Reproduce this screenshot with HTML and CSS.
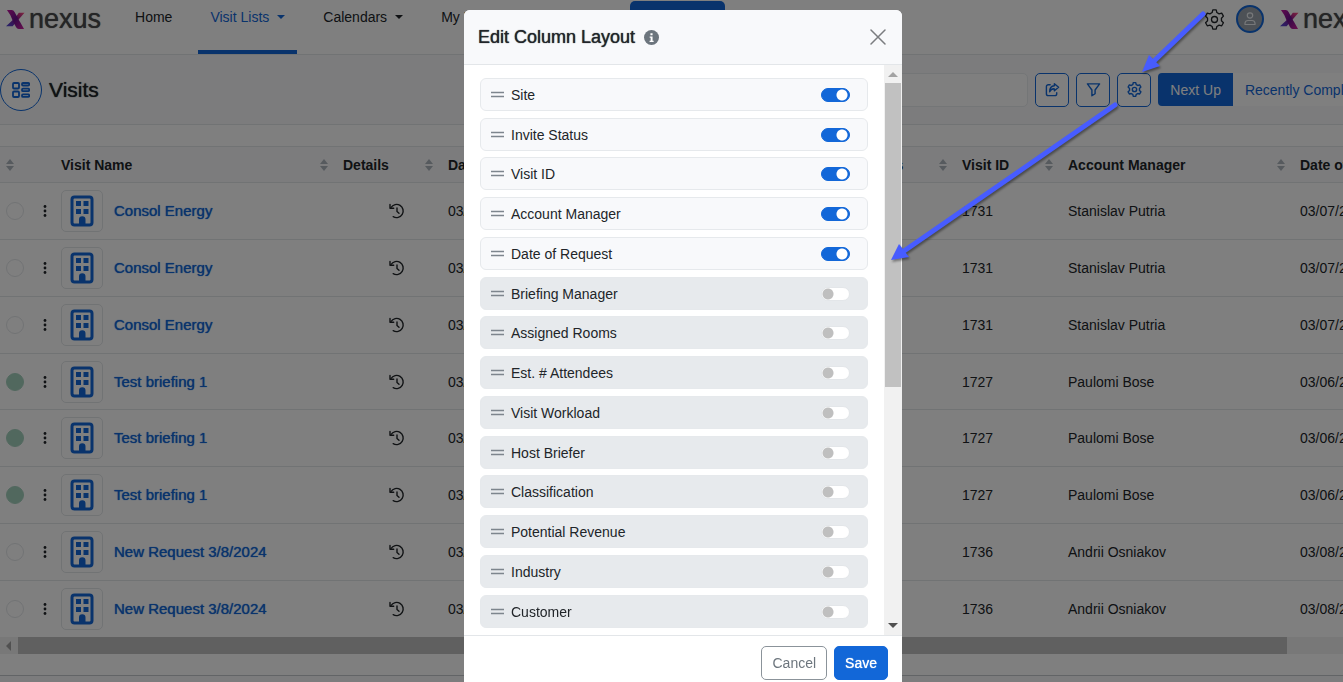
FILE: index.html
```
<!DOCTYPE html>
<html lang="en">
<head>
<meta charset="utf-8">
<title>Visits - Edit Column Layout</title>
<link rel="stylesheet" href="styles.css">
</head>
<body>
<svg class="defs" aria-hidden="true">
  <defs>
    <linearGradient id="logo-a" x1="1" y1="0" x2="0" y2="1"><stop offset="0" stop-color="#ff4f7f"/><stop offset=".45" stop-color="#8a1290"/><stop offset="1" stop-color="#4b4bd8"/></linearGradient>
    <linearGradient id="logo-b" x1="0" y1="0" x2="1" y2="1"><stop offset="0" stop-color="#c5179e"/><stop offset=".5" stop-color="#6a1190"/><stop offset="1" stop-color="#d0209c"/></linearGradient>
    <symbol id="logo" viewBox="0 0 20 21"><path d="M13.500 4h6L7 18H0L10 9Z" fill="url(#logo-a)"/><path d="M1 1h5q2 0 3 2l3.500 6.500q1 2.500 2.500 4.500l4 7h-5.500q-2 0-3-2L7 12Q5 6 1 1Z" fill="url(#logo-b)"/></symbol>
    <symbol id="building" viewBox="0 0 24 32"><rect x="2" y="2" width="20" height="28" rx="2.500" fill="none" stroke="currentColor" stroke-width="3"/><path fill="currentColor" d="M6 6h5v5H6zM13.500 6h5v5h-5zM6 14h5v5H6zM13.500 14h5v5h-5zM9 30v-5.500a3 3 0 0 1 6.500 0V30z"/></symbol>
    <symbol id="history" viewBox="0 0 16 16"><g fill="none" stroke="currentColor" stroke-width="1.400" stroke-linecap="round" stroke-linejoin="round"><path d="M2 4.500A6.600 6.600 0 1 1 4.200 13.700"/><path d="M1 1.500v3.700h3.700"/><path d="M8 5v3.500l2 1.800"/></g></symbol>
    <symbol id="sort" viewBox="0 0 8 12"><path fill="currentColor" d="M4 0 8 5H0zM4 12 0 7h8z"/></symbol>
    <symbol id="dots" viewBox="0 0 4 12"><g fill="currentColor"><circle cx="2" cy="1.500" r="1.400"/><circle cx="2" cy="6" r="1.400"/><circle cx="2" cy="10.500" r="1.400"/></g></symbol>
    <symbol id="gear" viewBox="0 0 16 16"><g fill="none" stroke="currentColor" stroke-linejoin="round"><path d="M6.700.7h2.600l.5 2 1.700 1 2-.6 1.300 2.300L13.300 7v2l1.500 1.500-1.300 2.300-2-.5-1.700 1-.5 2H6.700l-.5-2-1.700-1-2 .5-1.300-2.300L2.700 9V7L1.200 5.400l1.300-2.300 2 .6 1.700-1z"/><circle cx="8" cy="8" r="2.300"/></g></symbol>
    <symbol id="grip" viewBox="0 0 13 7"><path d="M0 1.500h13M0 5.500h13" stroke="currentColor" stroke-width="1.500"/></symbol>
  </defs>
</svg>

<div class="page">
  <header class="topbar">
    <a class="brand" href="#"><svg><use href="#logo"/></svg><span>nexus</span></a>
    <nav class="nav">
      <a href="#">Home</a>
      <a href="#" class="active">Visit Lists<i class="caret"></i></a>
      <a href="#">Calendars<i class="caret"></i></a>
      <a href="#">My Briefings</a>
    </nav>
    <button class="create" type="button">Create Visit</button>
    <div class="account">
      <svg class="gear"><use href="#gear"/></svg>
      <span class="avatar"><svg viewBox="0 0 12 14"><g fill="none" stroke="currentColor" stroke-width="1.200"><circle cx="6" cy="3.500" r="2.700"/><path d="M1 12.500v-1.500a3 3 0 0 1 3-2.500h4a3 3 0 0 1 3 2.500v1.500z" stroke-linejoin="round"/></g></svg></span>
      <a class="brand" href="#"><svg><use href="#logo"/></svg><span>nexus</span></a>
    </div>
  </header>

  <section class="toolbar">
    <span class="roundel"><svg viewBox="0 0 18 16"><g fill="none" stroke="currentColor" stroke-width="1.800"><rect x="1" y="1" width="6" height="5.500" rx="1"/><rect x="1" y="9.500" width="6" height="5.500" rx="1"/><rect x="10" y="1" width="7.200" height="2.500" rx="1"/><rect x="10" y="6.700" width="7.200" height="2.500" rx="1"/><rect x="10" y="12.400" width="7.200" height="2.500" rx="1"/></g></svg></span>
    <h1>Visits</h1>
    <input class="search" type="search" aria-label="Search visits">
    <button class="tool" type="button" aria-label="Share"><svg viewBox="0 0 16 16"><g fill="none" stroke="currentColor" stroke-width="1.500" stroke-linejoin="round" stroke-linecap="round"><path d="M5.500 3H3.500a2 2 0 0 0-2 2v7.500a2 2 0 0 0 2 2h7a2 2 0 0 0 2-2v-1"/><path d="M10 1.800 14.500 5.600 10 9.400V7.300Q6.500 7 5 10.500 4.800 4.400 10 4z"/></g></svg></button>
    <button class="tool" type="button" aria-label="Filter"><svg viewBox="0 0 16 16"><path d="M1.500 2h13L9.700 8.500v4L6.300 14.700V8.500z" fill="none" stroke="currentColor" stroke-width="1.500" stroke-linejoin="round"/></svg></button>
    <button class="tool gear-tool" type="button" aria-label="Column layout"><svg><use href="#gear"/></svg></button>
    <div class="segments"><button class="on" type="button">Next Up</button><button type="button">Recently Completed</button></div>
  </section>

  <main class="content">
    <table class="visits">
      <colgroup><col class="c-flag"><col class="c-name"><col class="c-details"><col class="c-date"><col class="c-site"><col class="c-status"><col class="c-id"><col class="c-manager"><col></colgroup>
      <thead><tr>
        <th class="flag"><svg class="sort"><use href="#sort"/></svg></th>
        <th><div>Visit Name<svg class="sort"><use href="#sort"/></svg></div></th>
        <th><div>Details<svg class="sort"><use href="#sort"/></svg></div></th>
        <th><div>Date<svg class="sort"><use href="#sort"/></svg></div></th>
        <th><div>Site<svg class="sort"><use href="#sort"/></svg></div></th>
        <th><div>Invite Status<svg class="sort"><use href="#sort"/></svg></div></th>
        <th><div>Visit ID<svg class="sort"><use href="#sort"/></svg></div></th>
        <th><div>Account Manager<svg class="sort"><use href="#sort"/></svg></div></th>
        <th><div>Date of Request</div></th>
      </tr></thead>
      <tbody>
        <tr><td class="flag"><div><i class="dot"></i><svg class="dots"><use href="#dots"/></svg></div></td><td><div><span class="tile"><svg><use href="#building"/></svg></span><a href="#">Consol Energy</a></div></td><td class="hist"><svg><use href="#history"/></svg></td><td>03/07/2024</td><td></td><td></td><td>1731</td><td>Stanislav Putria</td><td>03/07/2024</td></tr>
        <tr><td class="flag"><div><i class="dot"></i><svg class="dots"><use href="#dots"/></svg></div></td><td><div><span class="tile"><svg><use href="#building"/></svg></span><a href="#">Consol Energy</a></div></td><td class="hist"><svg><use href="#history"/></svg></td><td>03/07/2024</td><td></td><td></td><td>1731</td><td>Stanislav Putria</td><td>03/07/2024</td></tr>
        <tr><td class="flag"><div><i class="dot"></i><svg class="dots"><use href="#dots"/></svg></div></td><td><div><span class="tile"><svg><use href="#building"/></svg></span><a href="#">Consol Energy</a></div></td><td class="hist"><svg><use href="#history"/></svg></td><td>03/07/2024</td><td></td><td></td><td>1731</td><td>Stanislav Putria</td><td>03/07/2024</td></tr>
        <tr><td class="flag"><div><i class="dot green"></i><svg class="dots"><use href="#dots"/></svg></div></td><td><div><span class="tile"><svg><use href="#building"/></svg></span><a href="#">Test briefing 1</a></div></td><td class="hist"><svg><use href="#history"/></svg></td><td>03/06/2024</td><td></td><td></td><td>1727</td><td>Paulomi Bose</td><td>03/06/2024</td></tr>
        <tr><td class="flag"><div><i class="dot green"></i><svg class="dots"><use href="#dots"/></svg></div></td><td><div><span class="tile"><svg><use href="#building"/></svg></span><a href="#">Test briefing 1</a></div></td><td class="hist"><svg><use href="#history"/></svg></td><td>03/06/2024</td><td></td><td></td><td>1727</td><td>Paulomi Bose</td><td>03/06/2024</td></tr>
        <tr><td class="flag"><div><i class="dot green"></i><svg class="dots"><use href="#dots"/></svg></div></td><td><div><span class="tile"><svg><use href="#building"/></svg></span><a href="#">Test briefing 1</a></div></td><td class="hist"><svg><use href="#history"/></svg></td><td>03/06/2024</td><td></td><td></td><td>1727</td><td>Paulomi Bose</td><td>03/06/2024</td></tr>
        <tr><td class="flag"><div><i class="dot"></i><svg class="dots"><use href="#dots"/></svg></div></td><td><div><span class="tile"><svg><use href="#building"/></svg></span><a href="#">New Request 3/8/2024</a></div></td><td class="hist"><svg><use href="#history"/></svg></td><td>03/08/2024</td><td></td><td></td><td>1736</td><td>Andrii Osniakov</td><td>03/08/2024</td></tr>
        <tr><td class="flag"><div><i class="dot"></i><svg class="dots"><use href="#dots"/></svg></div></td><td><div><span class="tile"><svg><use href="#building"/></svg></span><a href="#">New Request 3/8/2024</a></div></td><td class="hist"><svg><use href="#history"/></svg></td><td>03/08/2024</td><td></td><td></td><td>1736</td><td>Andrii Osniakov</td><td>03/08/2024</td></tr>
      </tbody>
    </table>
    <div class="hscroll"><i class="arrow-left"></i><i class="thumb"></i></div>
  </main>
  <footer class="pagefoot"></footer>
</div>

<div class="backdrop">
  <div class="modal" role="dialog" aria-labelledby="dlg-title">
    <div class="modal-head">
      <h2 id="dlg-title">Edit Column Layout</h2>
      <svg class="info" viewBox="0 0 14 14"><circle cx="7" cy="7" r="7" fill="#6c757d"/><path d="M6 3h2v2H6zM5.300 6H8v4h1v1.200H5.200V10h1V7.200h-.9z" fill="#fff"/></svg>
      <button class="close" type="button" aria-label="Close"><svg viewBox="0 0 16 16"><path d="M1 1 15 15M15 1 1 15" stroke="currentColor" stroke-width="1.500" stroke-linecap="round"/></svg></button>
    </div>
    <div class="modal-body">
      <ul class="columns">
        <li class="on"><svg><use href="#grip"/></svg><label for="k1">Site</label><input id="k1" type="checkbox" checked></li>
        <li class="on"><svg><use href="#grip"/></svg><label for="k2">Invite Status</label><input id="k2" type="checkbox" checked></li>
        <li class="on"><svg><use href="#grip"/></svg><label for="k3">Visit ID</label><input id="k3" type="checkbox" checked></li>
        <li class="on"><svg><use href="#grip"/></svg><label for="k4">Account Manager</label><input id="k4" type="checkbox" checked></li>
        <li class="on"><svg><use href="#grip"/></svg><label for="k5">Date of Request</label><input id="k5" type="checkbox" checked></li>
        <li><svg><use href="#grip"/></svg><label for="k6">Briefing Manager</label><input id="k6" type="checkbox"></li>
        <li><svg><use href="#grip"/></svg><label for="k7">Assigned Rooms</label><input id="k7" type="checkbox"></li>
        <li><svg><use href="#grip"/></svg><label for="k8">Est. # Attendees</label><input id="k8" type="checkbox"></li>
        <li><svg><use href="#grip"/></svg><label for="k9">Visit Workload</label><input id="k9" type="checkbox"></li>
        <li><svg><use href="#grip"/></svg><label for="k10">Host Briefer</label><input id="k10" type="checkbox"></li>
        <li><svg><use href="#grip"/></svg><label for="k11">Classification</label><input id="k11" type="checkbox"></li>
        <li><svg><use href="#grip"/></svg><label for="k12">Potential Revenue</label><input id="k12" type="checkbox"></li>
        <li><svg><use href="#grip"/></svg><label for="k13">Industry</label><input id="k13" type="checkbox"></li>
        <li><svg><use href="#grip"/></svg><label for="k14">Customer</label><input id="k14" type="checkbox"></li>
      </ul>
      <div class="vscroll"><i class="arrow-up"></i><i class="thumb"></i><i class="arrow-down"></i></div>
    </div>
    <div class="modal-foot">
      <button class="cancel" type="button">Cancel</button>
      <button class="save" type="button">Save</button>
    </div>
  </div>
</div>

<svg class="pointers" width="1343" height="300" aria-hidden="true">
  <g stroke="#475cff" fill="#475cff">
    <path d="M1203 14 1153 62" stroke-width="5" stroke-linecap="round"/>
    <path d="M1142 72 1149 55 1160 66z" stroke="none"/>
    <path d="M1115 105 904 251" stroke-width="5" stroke-linecap="round"/>
    <path d="M891 260 899 244 909 257z" stroke="none"/>
  </g>
</svg>
</body>
</html>
```
FILE: styles.css
```
* { box-sizing: border-box; }
body {
  margin: 0;
  height: 100vh;
  overflow: hidden;
  background: #fff;
  color: #212529;
  font: 14px/20px "Liberation Sans", Arial, sans-serif;
}
a { color: inherit; text-decoration: none; }
button { font: inherit; cursor: pointer; }
svg { display: block; flex: none; }
.defs { position: absolute; width: 0; height: 0; }

/* The page is wider than the window and runs off its right edge */
.page { width: calc(100% + 52px); }

.topbar {
  display: flex;
  height: 55px;
  padding: 0 20px 0 6px;
  border-bottom: 1px solid #e3e6e9;
}
.brand {
  display: flex;
  align-items: center;
  gap: 4px;
  height: 37px;
  color: #4a4a4d;
  font-size: 27px;
  text-shadow: 0 0 1px currentColor;
}
.brand svg { width: 19px; height: 20px; }
.nav { display: flex; margin-left: 22px; }
.nav a { padding: 7px 12px 0; margin-right: 14px; white-space: nowrap; color: #212529; }
.nav a.active { color: #1267d8; border-bottom: 4px solid #1267d8; }
.caret {
  display: inline-block;
  margin-left: 8px;
  border: 4px solid transparent;
  border-top-color: currentColor;
  border-bottom: 0;
  vertical-align: 3px;
}
.create {
  width: 95px;
  height: 36px;
  margin: 1px 0 0 86px;
  border: 0;
  border-radius: 5px;
  background: #1267d8;
  color: #fff;
}
.account { display: flex; align-items: center; height: 38px; margin-left: auto; }
.account .gear { width: 21px; height: 21px; margin-right: 11px; }
.avatar {
  display: flex;
  align-items: center;
  justify-content: center;
  width: 28px;
  height: 28px;
  margin-right: 16px;
  border: 2px solid #1267d8;
  border-radius: 50%;
  background: #9aa3ad;
  color: #eef1f4;
}
.avatar svg { width: 12px; height: 14px; }

.toolbar {
  display: flex;
  align-items: center;
  gap: 7px;
  height: 70px;
  padding-right: 12px;
  border-bottom: 1px solid #e3e6e9;
  background: #f8f9fa;
}
.roundel {
  display: flex;
  align-items: center;
  justify-content: center;
  width: 42px;
  height: 42px;
  border: 1px solid #1267d8;
  border-radius: 50%;
  background: #fff;
  color: #1267d8;
}
.roundel svg { width: 18px; height: 16px; }
h1, h2 { margin: 0; font-weight: 400; text-shadow: 0 0 1px currentColor; }
h1 { font-size: 21px; color: #212529; }
.search {
  width: 330px;
  height: 34px;
  margin-left: auto;
  border: 1px solid #e9ecef;
  border-radius: 5px;
  background: #fff;
}
.tool {
  display: flex;
  align-items: center;
  justify-content: center;
  width: 34px;
  height: 34px;
  padding: 0;
  border: 1px solid #1267d8;
  border-radius: 5px;
  background: #fff;
  color: #1267d8;
}
.tool svg { width: 15px; height: 15px; }
.gear-tool svg { stroke-width: 1.5; }
.segments { display: flex; height: 33px; border-radius: 4px; background: #fff; overflow: hidden; }
.segments button { padding: 0 12px; border: 0; background: none; color: #1267d8; white-space: nowrap; }
.segments .on { background: #1267d8; color: #fff; }

.content { padding-top: 21px; }
.visits { width: 100%; border-collapse: separate; border-spacing: 0; table-layout: fixed; }
.c-flag { width: 52px; }
.c-name { width: 282px; }
.c-details { width: 105px; }
.c-date { width: 184px; }
.c-site { width: 188px; }
.c-status { width: 142px; }
.c-id { width: 106px; }
.c-manager { width: 232px; }
.visits th {
  height: 37px;
  padding: 0 6px 0 9px;
  border: solid #e3e6e9;
  border-width: 1px 0;
  background: #f8f9fa;
  text-align: left;
  white-space: nowrap;
}
.visits th div, .visits td div { display: flex; align-items: center; }
.visits th .sort { width: 8px; height: 12px; margin-left: auto; color: #adb5bd; }
.visits .flag { padding: 0 0 0 6px; }
.visits .flag > .sort { margin-left: 0; }
.visits td { height: 57px; padding: 0 9px; border-bottom: 1px solid #e3e6e9; }
.visits tr:nth-child(4n) td { height: 56px; }
.visits tr:last-child td { border-bottom: 0; }
.visits td a { color: #1267d8; font-size: 15px; text-shadow: 0 0 1px currentColor; }
.dot { flex: none; width: 18px; height: 18px; border: 1px solid #e3e6e9; border-radius: 50%; }
.dot.green { border-color: #a3d0bd; background: #a3d0bd; }
.dots { width: 4px; height: 12px; margin-left: 19px; }
.tile {
  display: flex;
  align-items: center;
  justify-content: center;
  width: 42px;
  height: 42px;
  margin-right: 11px;
  border: 1px solid #e3e6e9;
  border-radius: 5px;
  color: #1267d8;
}
.tile svg { width: 24px; height: 32px; }
.visits td.hist { padding-left: 55px; }
.hist svg { width: 16px; height: 16px; }

.hscroll { display: flex; align-items: center; height: 17px; background: #f1f1f1; }
.hscroll .arrow-left { margin: 0 7px 0 6px; border: 5px solid transparent; border-right-color: #a3a3a3; border-left: 0; }
.hscroll .thumb { width: 91%; height: 17px; background: #c1c1c1; }
.pagefoot { margin-top: 21px; height: 40px; border-top: 1px solid #c5c8cc; background: #f8f9fa; }

.backdrop {
  position: fixed;
  inset: 0;
  display: flex;
  justify-content: center;
  align-items: flex-start;
  padding: 10px 0 0 23px;
  background: rgba(0, 0, 0, .5);
}
.modal { width: 438px; border-radius: 6px; background: #fff; overflow: hidden; }
.modal-head {
  display: flex;
  align-items: center;
  height: 55px;
  padding: 0 16px 0 14px;
  border-bottom: 1px solid #e3e6e9;
  background: #f8f9fb;
}
h2 { font-size: 18px; }
.info { width: 15px; height: 15px; margin-left: 9px; }
.close { margin-left: auto; padding: 0; border: 0; background: none; color: #7b7d80; }
.close svg { width: 16px; height: 16px; }
.modal-body { display: flex; border-bottom: 1px solid #e3e6e9; }
.columns { flex: 1; margin: 0; padding: 13px 16px 1px; list-style: none; }
.columns li {
  display: flex;
  align-items: center;
  height: 33px;
  margin-bottom: 7px;
  padding: 0 17px 0 10px;
  border: 1px solid #e6e9ec;
  border-radius: 6px;
  background: #e7eaed;
}
.columns li:nth-child(4n+2) { margin-bottom: 6px; }
.columns .on { background: #f8f9fb; }
.columns svg { width: 13px; height: 7px; margin-right: 7px; color: #7d858d; }
.columns label { flex: 1; }
.columns input {
  appearance: none;
  width: 29px;
  height: 14px;
  margin: 0;
  border: 1px solid #e3e6e9;
  border-radius: 7px;
  background: radial-gradient(circle at 6px 6px, #bfbfbf 5px, transparent 6px) #fff;
}
.columns input:checked {
  border-color: #1267d8;
  background: radial-gradient(circle at 20px 6px, #fff 5px, transparent 6px) #1267d8;
}
.vscroll { display: flex; flex-direction: column; align-items: center; width: 18px; background: #f1f1f1; }
.vscroll .arrow-up { margin: 7px 0 6px; border: 5px solid transparent; border-bottom-color: #a3a3a3; border-top: 0; }
.vscroll .thumb { width: 16px; height: 304px; background: #c1c1c1; }
.vscroll .arrow-down { margin: auto 0 7px; border: 5px solid transparent; border-top-color: #505050; border-bottom: 0; }
.modal-foot { display: flex; justify-content: flex-end; gap: 7px; padding: 10px 14px 14px; }
.modal-foot button { height: 34px; padding: 0 10px; border: 1px solid #1267d8; border-radius: 5px; }
.modal-foot .cancel { border-color: #8b939a; background: #fff; color: #6c757d; }
.modal-foot .save { background: #1267d8; color: #fff; text-shadow: 0 0 1px currentColor; }

/* Callout arrows drawn over everything else */
.pointers {
  position: fixed;
  top: 0;
  left: 0;
  pointer-events: none;
  filter: drop-shadow(1px 2px 1px rgba(0, 0, 0, .4));
}
```
